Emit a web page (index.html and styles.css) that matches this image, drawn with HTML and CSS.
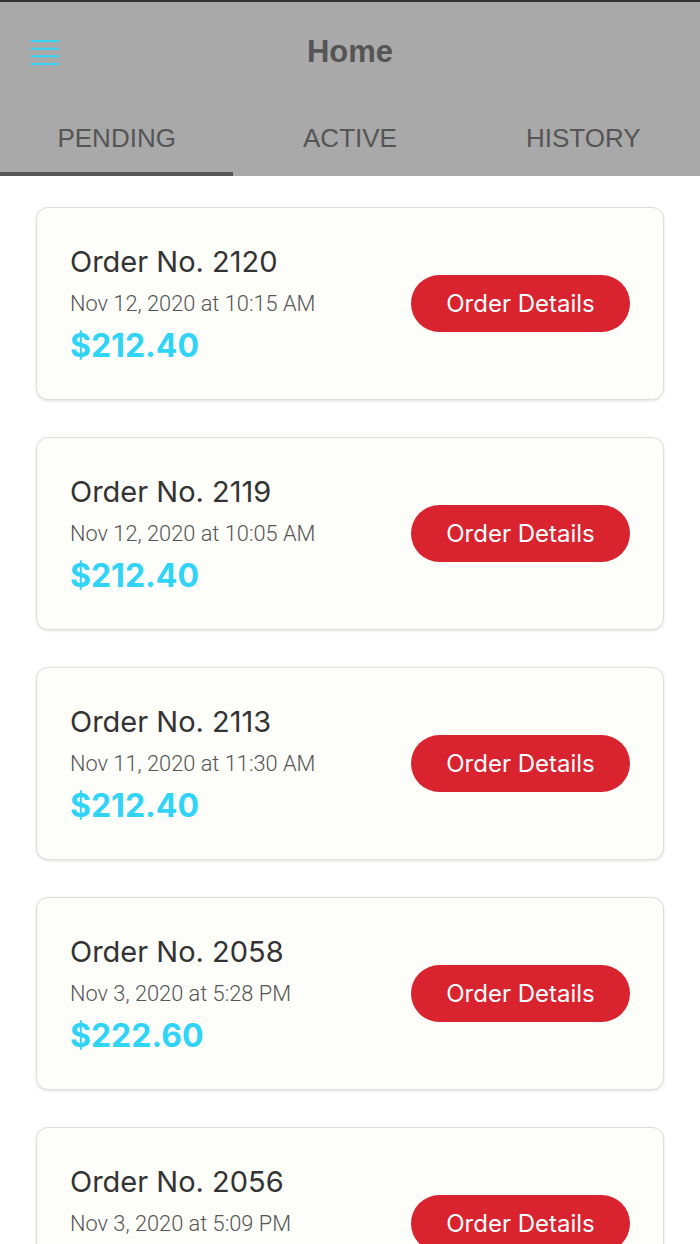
FILE: index.html
```html
<!DOCTYPE html>
<html lang="en">
<head>
  <meta charset="UTF-8">
  <meta name="viewport" content="width=device-width, initial-scale=1.0">
  <title>Home</title>
  <link rel="stylesheet" href="styles.css">
</head>
<body>
  <div class="header">
    <div class="topbar">
      <span class="menu-btn">
        <svg width="28" height="25" viewBox="0 0 28 25">
          <rect x="0" y="0" width="28" height="2" fill="#2fd4f7"/>
          <rect x="0" y="7.7" width="28" height="2" fill="#2fd4f7"/>
          <rect x="0" y="15.3" width="28" height="2" fill="#2fd4f7"/>
          <rect x="0" y="23" width="28" height="2" fill="#2fd4f7"/>
        </svg>
      </span>
      <h1>Home</h1>
    </div>
    <div class="tabs">
      <a href="#" class="tab active">PENDING</a>
      <a href="#" class="tab">ACTIVE</a>
      <a href="#" class="tab">HISTORY</a>
    </div>
  </div>

  <div class="orders">
    <div class="card">
      <div class="info">
        <div class="order-no">Order No. 2120</div>
        <div class="date">Nov 12, 2020 at 10:15 AM</div>
        <div class="price">$212.40</div>
      </div>
      <button class="details">Order Details</button>
    </div>
    <div class="card">
      <div class="info">
        <div class="order-no">Order No. 2119</div>
        <div class="date">Nov 12, 2020 at 10:05 AM</div>
        <div class="price">$212.40</div>
      </div>
      <button class="details">Order Details</button>
    </div>
    <div class="card">
      <div class="info">
        <div class="order-no">Order No. 2113</div>
        <div class="date">Nov 11, 2020 at 11:30 AM</div>
        <div class="price">$212.40</div>
      </div>
      <button class="details">Order Details</button>
    </div>
    <div class="card">
      <div class="info">
        <div class="order-no">Order No. 2058</div>
        <div class="date">Nov 3, 2020 at 5:28 PM</div>
        <div class="price">$222.60</div>
      </div>
      <button class="details">Order Details</button>
    </div>
    <div class="card">
      <div class="info">
        <div class="order-no">Order No. 2056</div>
        <div class="date">Nov 3, 2020 at 5:09 PM</div>
        <div class="price">$212.40</div>
      </div>
      <button class="details">Order Details</button>
    </div>
  </div>
</body>
</html>
```

FILE: styles.css
```css
body {
  font-family: Inter, "Liberation Sans", sans-serif;
  background-color: #ffffff;
  margin: 0;
  padding: 0;
  height: 1244px;
  overflow: hidden;
}

.header {
  background-color: #a9a9a9;
  border-top: 2px solid #333;
  font-family: "Liberation Sans", Arial, sans-serif;
}

.topbar {
  display: flex;
  align-items: center;
  justify-content: center;
  position: relative;
  height: 98px;
}

.menu-btn {
  position: absolute;
  left: 31px;
  top: 38px;
  display: flex;
}

.topbar h1 {
  margin: 0;
  margin-top: 2px;
  font-size: 31px;
  font-weight: bold;
  color: #555;
}

.tabs {
  display: flex;
  height: 76px;
}

.tab {
  flex: 1;
  display: flex;
  align-items: center;
  justify-content: center;
  padding-top: 4px;
  color: #555;
  text-decoration: none;
  font-size: 26px;
  border-bottom: 4px solid transparent;
}

.tab.active {
  border-bottom-color: #555;
}

.orders {
  display: flex;
  flex-direction: column;
  gap: 37px;
  padding: 31px 36px 0 36px;
}

.card {
  display: flex;
  align-items: center;
  justify-content: space-between;
  height: 191px;
  padding: 0 33px 0 33px;
  background-color: #fdfdf9;
  border: 1px solid #dedede;
  border-radius: 12px;
  box-shadow: 0 1px 3px rgba(0, 0, 0, 0.12);
  flex-shrink: 0;
}

.info {
  display: flex;
  flex-direction: column;
  gap: 4px;
}

.order-no {
  font-size: 29px;
  color: #333;
  line-height: 38px;
}

.date {
  font-family: Roboto, Inter, sans-serif;
  font-size: 21.8px;
  font-weight: 300;
  color: #555;
  line-height: 38px;
}

.price {
  font-size: 32px;
  font-weight: bold;
  color: #2fd4f7;
  line-height: 38px;
}

.details {
  width: 219px;
  height: 57px;
  border: none;
  border-radius: 29px;
  background-color: #d9232f;
  color: white;
  font-family: Inter, "Liberation Sans", sans-serif;
  font-size: 24px;
  cursor: pointer;
}
```
